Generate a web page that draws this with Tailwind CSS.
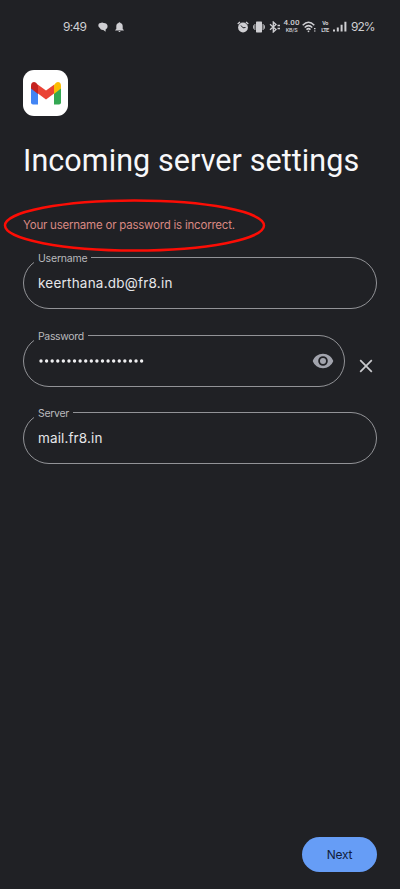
<!DOCTYPE html>
<html lang="en">
<head>
<meta charset="utf-8">
<title>Incoming server settings</title>
<script src="https://cdn.jsdelivr.net/npm/@tailwindcss/browser@4"></script>
</head>
<body class="bg-[#202125] font-['Inter',sans-serif]">
<div class="relative flex h-[889px] w-[400px] flex-col overflow-hidden bg-[#202125]">
  <header class="flex h-[53px] shrink-0 items-center pl-[63px] text-[#cfcfd3]">
    <span class="w-[35px] whitespace-nowrap text-[12px] leading-none tracking-[-0.7px]">9:49</span>
    <svg class="h-[10px] w-[10px] shrink-0" viewBox="0 0 10 10" fill="currentColor"><path d="M.3 3Q.6 1 2.500 1Q4 .2 5.700 .9Q9 .8 9.600 4Q9.800 6.500 7.600 7.600V9.800L5.300 8Q2.500 8.200 1.800 6Q.2 5 .3 3Z"/></svg>
    <svg class="ml-[7px] h-[10px] w-[9px] shrink-0" viewBox="0 0 9 10" fill="currentColor"><path d="M4.500 .2C5.100.200 5.400.600 5.400 1.100C7.200 1.600 7.700 3 7.700 4.500V6.900L8.800 8V8.600H.2V8L1.300 6.900V4.500C1.300 3 1.800 1.600 3.600 1.100C3.600.600 3.900.200 4.500.200ZM3.400 9H5.600Q5.300 10 4.500 10T3.400 9Z"/></svg>
    <svg class="ml-[113px] h-[12px] w-[12px] shrink-0" viewBox="0 0 12 12"><circle cx="6" cy="6.500" r="4.900" fill="currentColor"/><path d="M.7 3L3 .9M11.300 3L9 .9" stroke="currentColor" stroke-width="1.300"/><path d="M4 4.500L6 6.800L8.500 6.500" fill="none" stroke="#202125" stroke-width="1"/></svg>
    <svg class="ml-[4px] h-[12px] w-[12px] shrink-0" viewBox="0 0 12 12"><rect x="3" y=".5" width="6" height="11" rx=".7" fill="currentColor"/><path d="M1.900 3V9M.6 4.300V7.700M10.100 3V9M11.400 4.300V7.700" stroke="currentColor" stroke-width=".9"/></svg>
    <svg class="ml-[4px] h-[12px] w-[12px] shrink-0" viewBox="0 0 12 12" fill="none" stroke="currentColor" stroke-width="1.300"><path d="M1 3.200L7 8.600L4.300 11V1L7 3.400L1 8.800"/><path d="M8.500 4.400H11M8.500 7.600H11" stroke-width="1.500"/></svg>
    <div class="ml-[2px] flex w-[17px] flex-col items-center whitespace-nowrap font-['Roboto',sans-serif]">
      <span class="text-[8px] font-medium leading-[8px]">4.00</span><span class="text-[5.500px] font-medium leading-[7px] tracking-[-0.2px]">KB/S</span>
    </div>
    <svg class="ml-[2px] h-[12px] w-[15px] shrink-0" viewBox="0 0 15 12" fill="none" stroke="currentColor" stroke-width="1.500"><path d="M.7 4.200Q6.500-1.600 12.300 4.200M2.700 6.500Q6.500 2.800 10.300 6.500M4.500 8.600Q6.500 6.700 8.500 8.600"/><circle cx="6.500" cy="10.300" r=".9" fill="currentColor" stroke="none"/><path d="M12 7.600H13.500M12 10H13.500" stroke-width="1.200"/></svg>
    <div class="ml-[4px] flex w-[8px] flex-col items-center font-['Roboto',sans-serif] text-[5.500px] font-bold leading-[7px] tracking-[-0.500px]">
      <span>Vo</span><span>LTE</span>
    </div>
    <svg class="ml-[4px] h-[11px] w-[14px] shrink-0" viewBox="0 0 14 11" fill="currentColor"><path d="M0 8.500H2V10.500H0ZM3.800 6.500H5.800V10.500H3.800ZM7.600 3.800H9.600V10.500H7.600ZM11.400 .8H13.400V10.500H11.400Z"/></svg>
    <span class="ml-[4px] whitespace-nowrap text-[12px] leading-none tracking-[-1px]">92%</span>
  </header>

  <main class="flex grow flex-col pl-[23px] pr-[23px] pt-[17px]">
    <div class="flex h-[46px] w-[45px] items-center justify-center rounded-[11px] bg-white">
      <svg class="h-[24px] w-[32px]" viewBox="0 0 32 24"><path fill="#4285f4" d="M1 6L8 10V23.500H3Q1 23.500 1 21.500Z"/><path fill="#34a853" d="M24 10L31 6V21.500Q31 23.500 29 23.500H24Z"/><path fill="#fbbc04" d="M24 4L26 1.800Q28 .2 30 1.800Q31 3 31 4.800V7.500L24 13Z"/><path fill="#c5221f" d="M8 4L6 1.800Q4 .2 2 1.800Q1 3 1 4.800V7.500L8 13Z"/><path fill="#ea4335" d="M8 3.700L16 9.500L24 3.700V12.500L16 18.500L8 12.500Z"/></svg>
    </div>
    <h1 class="mt-[25px] h-[40px] whitespace-nowrap font-['Roboto',sans-serif] text-[30.500px] font-normal leading-[40px] tracking-[0.080px] text-[#f8f8fa]">Incoming server settings</h1>
    <p class="mt-[36px] h-[16px] whitespace-nowrap text-[11.500px] leading-[16px] tracking-[-0.220px] text-[#d98983]">Your username or password is incorrect.</p>

    <div class="mt-[24px] flex flex-col gap-[25.500px]">
      <div class="relative flex h-[52px] items-center rounded-full border border-[#929397] pl-[14px]">
        <label class="absolute left-[10px] top-[-6px] bg-[#202125] pl-[4px] pr-[4px] text-[10.500px] leading-[14px] tracking-[-0.200px] text-[#b9babd]">Username</label>
        <span class="text-[13.500px] leading-[18px] tracking-[0.220px] text-[#e6e6e9]">keerthana.db@fr8.in</span>
      </div>
      <div class="flex h-[52px] items-center">
        <div class="relative flex h-[52px] w-[322px] items-center justify-between rounded-full border border-[#929397] pl-[15px] pr-[10px]">
          <label class="absolute left-[10px] top-[-6px] bg-[#202125] pl-[4px] pr-[4px] text-[10.500px] leading-[14px] tracking-[-0.350px] text-[#b9babd]">Password</label>
          <svg class="h-[4px] w-[106px]" viewBox="0 0 106 4"><path d="M2 2H104" fill="none" stroke="#f0f0f2" stroke-width="3.400" stroke-linecap="round" stroke-dasharray="0 5.590"/></svg>
          <svg class="h-[16px] w-[22px]" viewBox="0 0 22 16"><path fill="#a2a4ad" fill-rule="evenodd" d="M11 .8C6.200.800 2.300 3.800.700 8C2.300 12.200 6.200 15.200 11 15.200S19.700 12.200 21.300 8C19.700 3.800 15.800.800 11 .8ZM11 12.800A4.800 4.800 0 1 1 11 3.200A4.800 4.800 0 0 1 11 12.800Z"/><circle cx="11" cy="8" r="3" fill="#a2a4ad"/></svg>
        </div>
        <svg class="ml-[14px] mt-[10px] h-[14px] w-[14px]" viewBox="0 0 14 14"><path d="M1.200 1.200L12.800 12.800M12.800 1.200L1.200 12.800" stroke="#c9cacd" stroke-width="1.700"/></svg>
      </div>
      <div class="relative flex h-[52px] items-center rounded-full border border-[#929397] pl-[14px]">
        <label class="absolute left-[10px] top-[-6px] bg-[#202125] pl-[4px] pr-[4px] text-[10.500px] leading-[14px] tracking-[-0.300px] text-[#b9babd]">Server</label>
        <span class="text-[13.500px] leading-[18px] tracking-[0.130px] text-[#e6e6e9]">mail.fr8.in</span>
      </div>
    </div>
    <button class="mb-[17px] mt-auto h-[35px] w-[75px] self-end rounded-full bg-[#669df6] text-[12px] leading-[35px] tracking-[-0.200px] text-[#101c3c]">Next</button>
  </main>
  <svg class="absolute left-[3px] top-[198px] h-[55px] w-[264px]" viewBox="0 0 264 55"><ellipse cx="131.500" cy="27.500" rx="129.500" ry="25" fill="none" stroke="#fc0d05" stroke-width="2.500"/></svg>
</div>
</body>
</html>
